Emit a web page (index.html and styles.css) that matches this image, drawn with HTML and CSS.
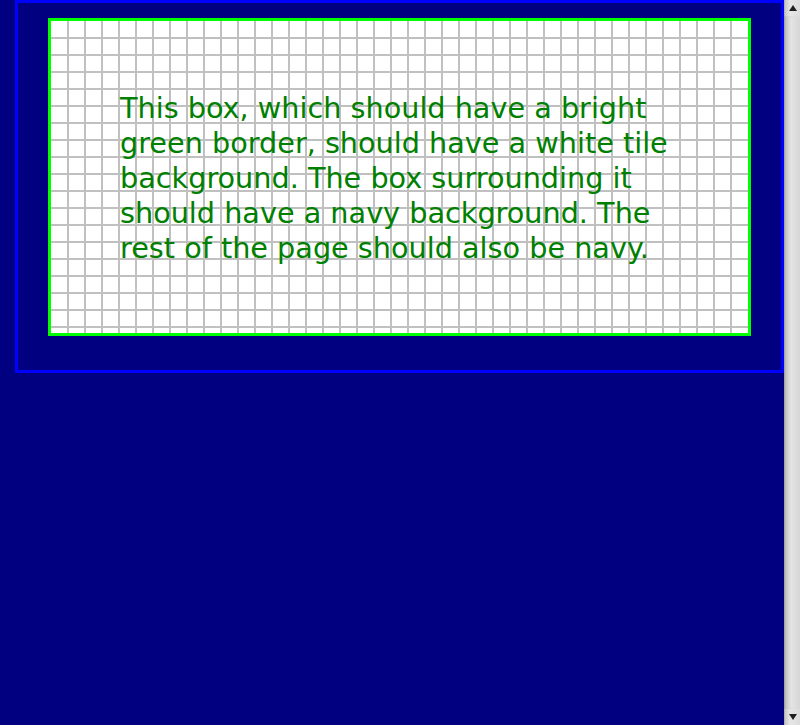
FILE: index.html
```html
<!DOCTYPE html>
<html>
<head>
<meta charset="utf-8">
<title>Background tile test</title>
<link rel="stylesheet" href="styles.css">
</head>
<body>
  <div class="page">
    <div class="outer">
      <div class="tile-box">
        <p class="message">This box, which should have a bright green border, should have a white tile background. The box surrounding it should have a navy background. The rest of the page should also be navy.</p>
      </div>
    </div>
  </div>
  <div class="scrollbar" aria-hidden="true">
    <div class="sb-button sb-up"><span class="arrow-up"></span></div>
    <div class="sb-track"><div class="sb-thumb"></div></div>
    <div class="sb-button sb-down"><span class="arrow-down"></span></div>
  </div>
</body>
</html>
```

FILE: styles.css
```css
html {
  background: #000080;
}

body {
  margin: 0;
  min-height: 100vh;
  display: flex;
  background: #000080;
  font-family: "DejaVu Sans", Verdana, sans-serif;
}

.page {
  flex: 1;
  padding-left: 15px;
}

.outer {
  border: 3px solid #0000ff;
  padding: 15px 30px 34px 30px;
  background: #000080;
}

.tile-box {
  border: 3px solid #00ff00;
  padding: 70px 69px 67px 69px;
  background-color: #ffffff;
  background-image:
    repeating-linear-gradient(90deg, transparent 0 15px, #c0c0c0 15px 17px),
    repeating-linear-gradient(180deg, transparent 0 15px, #c0c0c0 15px 17px);
  background-origin: padding-box;
  background-clip: padding-box;
  background-repeat: no-repeat, no-repeat;
  background-size: calc(100% - 2px) 100%, 100% calc(100% - 1px);
  background-position: 1px 0, 0 1px;
}

.message {
  margin: 0;
  color: #008000;
  font-size: 28.7px;
  line-height: 35px;
}

/* imitation of the window scrollbar at the right edge */
.scrollbar {
  width: 16px;
  display: flex;
  flex-direction: column;
  background: linear-gradient(90deg, #8c8c8c 0, #b8b8b8 1px, #d4d4d4 4px, #dedee2 9px, #d8d8dc 16px);
}

.sb-button {
  height: 16px;
  display: flex;
  align-items: center;
  justify-content: center;
  background: linear-gradient(90deg, #9a9a9a 0, #c8c8c8 1px, #e6e6e6 6px, #dcdcdc 16px);
}

.sb-track {
  flex: 1;
  display: flex;
  flex-direction: column;
  padding: 1px 0;
}

.sb-thumb {
  flex: 1;
  border-radius: 3px;
  background: linear-gradient(90deg, #9a9a9a 0, #c4c4c4 2px, #e4e4e4 7px, #d6d6d8 16px);
}

.arrow-up,
.arrow-down {
  width: 0;
  height: 0;
  border-left: 4px solid transparent;
  border-right: 4px solid transparent;
  margin-left: 1px;
}

.arrow-up {
  border-bottom: 6px solid #202020;
}

.arrow-down {
  border-top: 6px solid #202020;
}
```
